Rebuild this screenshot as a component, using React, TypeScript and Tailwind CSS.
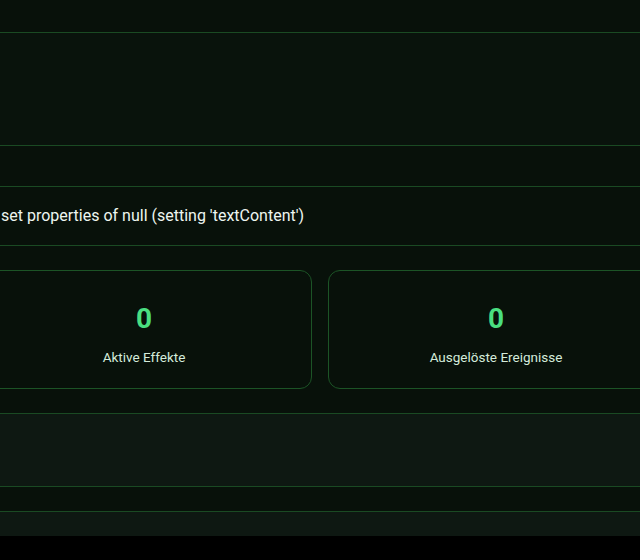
type Stat = { value: number; label: string };

const stats: Stat[] = [
  { value: 0, label: "Aktive Effekte" },
  { value: 0, label: "Ausgelöste Ereignisse" },
];

function StatCard({ stat }: { stat: Stat }) {
  return (
    <div className="h-[119px] rounded-xl border border-[#1c5426] bg-[#08110a] flex flex-col items-center pt-[31px]">
      <div className="text-[28px] leading-[34px] font-bold text-[#4ade80]">{stat.value}</div>
      <div className="mt-[11px] text-[13.5px] leading-[20px] text-[#d4ecdb]">{stat.label}</div>
    </div>
  );
}

export default function App() {
  return (
    <div className="min-h-screen bg-black font-['Roboto',sans-serif]">
      <div className="bg-[#08110a] overflow-hidden">
        <header className="h-[33px] border-b border-[#1a4a23]" />

        <section className="h-[113px] bg-[#09130c] border-b border-[#1a4a23]" />

        <div className="mt-[40px] h-[60px] border-y border-[#1a4a23] flex items-center">
          <p className="text-[16px] text-[#eef6f0] whitespace-nowrap pl-[1px]">
            set properties of null (setting 'textContent')
          </p>
        </div>

        <div className="mt-[24px] -ml-[24px] w-[688px] grid grid-cols-2 gap-4">
          {stats.map((s) => (
            <StatCard key={s.label} stat={s} />
          ))}
        </div>

        <section className="mt-[24px] h-[74px] bg-[#0e1812] border-y border-[#1a4a23]" />

        <section className="mt-[24px] h-[25px] bg-[#0e1812] border-t border-[#1a4a23]" />
      </div>
    </div>
  );
}
